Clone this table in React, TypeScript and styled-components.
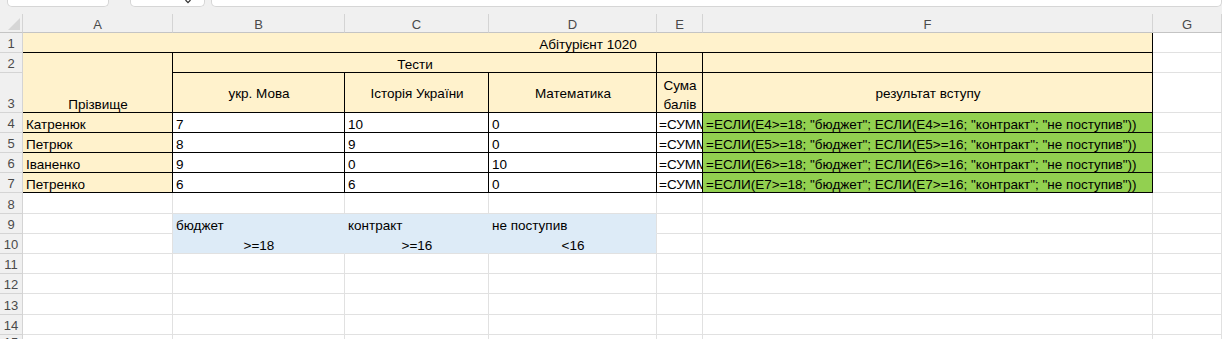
import React from "react";
import styled, { createGlobalStyle } from "styled-components";

const YELLOW = "#fff2cc";
const GREEN = "#92d050";
const BLUE = "#ddebf7";
const GRID = "#e1e1e1";
const INK = "#000";
const HEAD_BG = "#f0f0f0";
const HEAD_LINE = "#d4d4d4";

const GlobalStyle = createGlobalStyle`
  html, body {
    margin: 0;
    padding: 0;
    background: #f0f0f0;
  }
  body {
    font-family: "Liberation Sans", Arial, sans-serif;
    overflow: hidden;
  }
`;

const Page = styled.div`
  width: 1222px;
  height: 339px;
  overflow: hidden;
  background: ${HEAD_BG};
`;

const TopStrip = styled.div`
  height: 14px;
  display: flex;
  align-items: flex-start;
`;

const NameBox = styled.div<{ $w?: number; $gap: number }>`
  position: relative;
  margin-left: ${(p) => p.$gap}px;
  width: ${(p) => (p.$w ? `${p.$w}px` : "auto")};
  flex: ${(p) => (p.$w ? "none" : "1")};
  height: 6px;
  background: #fff;
  border: 1px solid #d6d6d6;
  border-top: none;
  border-radius: 0 0 5px 5px;
`;

const Chevron = styled.svg`
  position: absolute;
  left: 54px;
  top: 0;
`;

const Sheet = styled.div`
  display: grid;
  grid-template-columns: 23px 150px 172px 144px 168px 46px 450px 1fr;
  grid-template-rows: 19px 20px 20px 40px 20px 20px 20px 20px 21px 20px 20px 20px 20px 21px 20px;
  background: #fff;
`;

const Corner = styled.div`
  background: ${HEAD_BG};
  border-right: 1px solid ${HEAD_LINE};
  border-bottom: 1px solid #c4c4c4;
  display: flex;
  align-items: flex-end;
  justify-content: flex-end;
  padding: 0 2px 2px 0;
`;

const ColHead = styled.div`
  background: ${HEAD_BG};
  border-right: 1px solid ${HEAD_LINE};
  border-bottom: 1px solid #c4c4c4;
  display: flex;
  align-items: center;
  justify-content: center;
  font-size: 13px;
  color: #4a4a4a;
  padding-top: 2px;
`;

const RowHead = styled.div`
  background: ${HEAD_BG};
  border-right: 1px solid ${HEAD_LINE};
  border-bottom: 1px solid ${HEAD_LINE};
  display: flex;
  align-items: flex-end;
  justify-content: center;
  font-size: 13px;
  line-height: 15px;
  color: #4a4a4a;
  padding-bottom: 1px;
`;

type CellProps = {
  $bg?: string;
  $span?: number;
  $rows?: number;
  $edge?: boolean;
  $right?: string;
  $bottom?: string;
  $align?: "flex-start" | "center";
  $v?: "flex-end" | "center";
};

const Cell = styled.div<CellProps>`
  grid-column: span ${(p) => p.$span ?? 1};
  grid-row: span ${(p) => p.$rows ?? 1};
  background: ${(p) => p.$bg ?? "#fff"};
  border-right: 1px solid ${(p) => (p.$edge ? INK : p.$right ?? GRID)};
  border-bottom: 1px solid ${(p) => (p.$edge ? INK : p.$bottom ?? GRID)};
  display: flex;
  align-items: ${(p) => p.$v ?? "flex-end"};
  justify-content: ${(p) => p.$align ?? "flex-start"};
  text-align: center;
  padding: ${(p) => (p.$v === "center" ? "2px 2px 0 3px" : "0 2px 0 3px")};
  font-size: 13.5px;
  line-height: 15px;
  color: #000;
  white-space: nowrap;
  overflow: hidden;
  min-width: 0;
`;

// the sum column is too narrow for its formula, so it is cut at the border
const SumCell = styled(Cell)`
  padding: 0 0 0 2px;
`;

const Wrap = styled.span`
  display: block;
  width: 38px;
  line-height: 19px;
  white-space: normal;
  margin-bottom: -2px;
`;

const students = [
  { name: "Катренюк", b: "7", c: "10", d: "0" },
  { name: "Петрюк", b: "8", c: "9", d: "0" },
  { name: "Іваненко", b: "9", c: "0", d: "10" },
  { name: "Петренко", b: "6", c: "6", d: "0" },
];

const letters = ["A", "B", "C", "D", "E", "F", "G"];

const EmptyRow = ({ n }: { n: number }) => (
  <>
    <RowHead>{n}</RowHead>
    {letters.map((l) => (
      <Cell key={l} />
    ))}
  </>
);

export default function App() {
  return (
    <Page>
      <GlobalStyle />
      <TopStrip>
        <NameBox $w={100} $gap={7} />
        <NameBox $w={73} $gap={21}>
          <Chevron width="6" height="4" viewBox="0 0 6 4">
            <path d="M0.5 0 L3 2.6 L5.5 0" stroke="#333" strokeWidth="1.2" fill="none" />
          </Chevron>
        </NameBox>
        <NameBox $gap={6} />
      </TopStrip>

      <Sheet>
        <Corner>
          <svg width="12" height="12" viewBox="0 0 12 12">
            <polygon points="12,0 12,12 0,12" fill="#d6d6d6" />
          </svg>
        </Corner>
        {letters.map((l) => (
          <ColHead key={l}>{l}</ColHead>
        ))}

        {/* row 1 */}
        <RowHead>1</RowHead>
        <Cell $span={6} $bg={YELLOW} $edge $align="center">
          Абітурієнт 1020
        </Cell>
        <Cell />

        {/* row 2 */}
        <RowHead>2</RowHead>
        <Cell $rows={2} $bg={YELLOW} $edge $align="center">
          Прізвище
        </Cell>
        <Cell $span={3} $bg={YELLOW} $edge $align="center">
          Тести
        </Cell>
        <Cell $bg={YELLOW} $edge />
        <Cell $bg={YELLOW} $edge />
        <Cell />

        {/* row 3 */}
        <RowHead>3</RowHead>
        <Cell $bg={YELLOW} $edge $align="center" $v="center">
          укр. Мова
        </Cell>
        <Cell $bg={YELLOW} $edge $align="center" $v="center">
          Історія України
        </Cell>
        <Cell $bg={YELLOW} $edge $align="center" $v="center">
          Математика
        </Cell>
        <Cell $bg={YELLOW} $edge $align="center">
          <Wrap>Сума балів</Wrap>
        </Cell>
        <Cell $bg={YELLOW} $edge $align="center" $v="center">
          результат вступу
        </Cell>
        <Cell />

        {/* rows 4-7 */}
        {students.map((s, i) => {
          const r = i + 4;
          return (
            <React.Fragment key={s.name}>
              <RowHead>{r}</RowHead>
              <Cell $bg={YELLOW} $edge>
                {s.name}
              </Cell>
              <Cell $edge>{s.b}</Cell>
              <Cell $edge>{s.c}</Cell>
              <Cell $edge>{s.d}</Cell>
              <SumCell $edge>=СУММ</SumCell>
              <Cell $bg={GREEN} $edge>
                =ЕСЛИ(E{r}&gt;=18; "бюджет"; ЕСЛИ(E{r}&gt;=16; "контракт"; "не поступив"))
              </Cell>
              <Cell />
            </React.Fragment>
          );
        })}

        <EmptyRow n={8} />

        {/* row 9 */}
        <RowHead>9</RowHead>
        <Cell />
        <Cell $bg={BLUE} $right={BLUE} $bottom={BLUE}>
          бюджет
        </Cell>
        <Cell $bg={BLUE} $right={BLUE} $bottom={BLUE}>
          контракт
        </Cell>
        <Cell $bg={BLUE} $bottom={BLUE}>
          не поступив
        </Cell>
        <Cell />
        <Cell />
        <Cell />

        {/* row 10 */}
        <RowHead>10</RowHead>
        <Cell />
        <Cell $bg={BLUE} $right={BLUE} $align="center">
          &gt;=18
        </Cell>
        <Cell $bg={BLUE} $right={BLUE} $align="center">
          &gt;=16
        </Cell>
        <Cell $bg={BLUE} $align="center">
          &lt;16
        </Cell>
        <Cell />
        <Cell />
        <Cell />

        {[11, 12, 13, 14, 15].map((n) => (
          <EmptyRow key={n} n={n} />
        ))}
      </Sheet>
    </Page>
  );
}
